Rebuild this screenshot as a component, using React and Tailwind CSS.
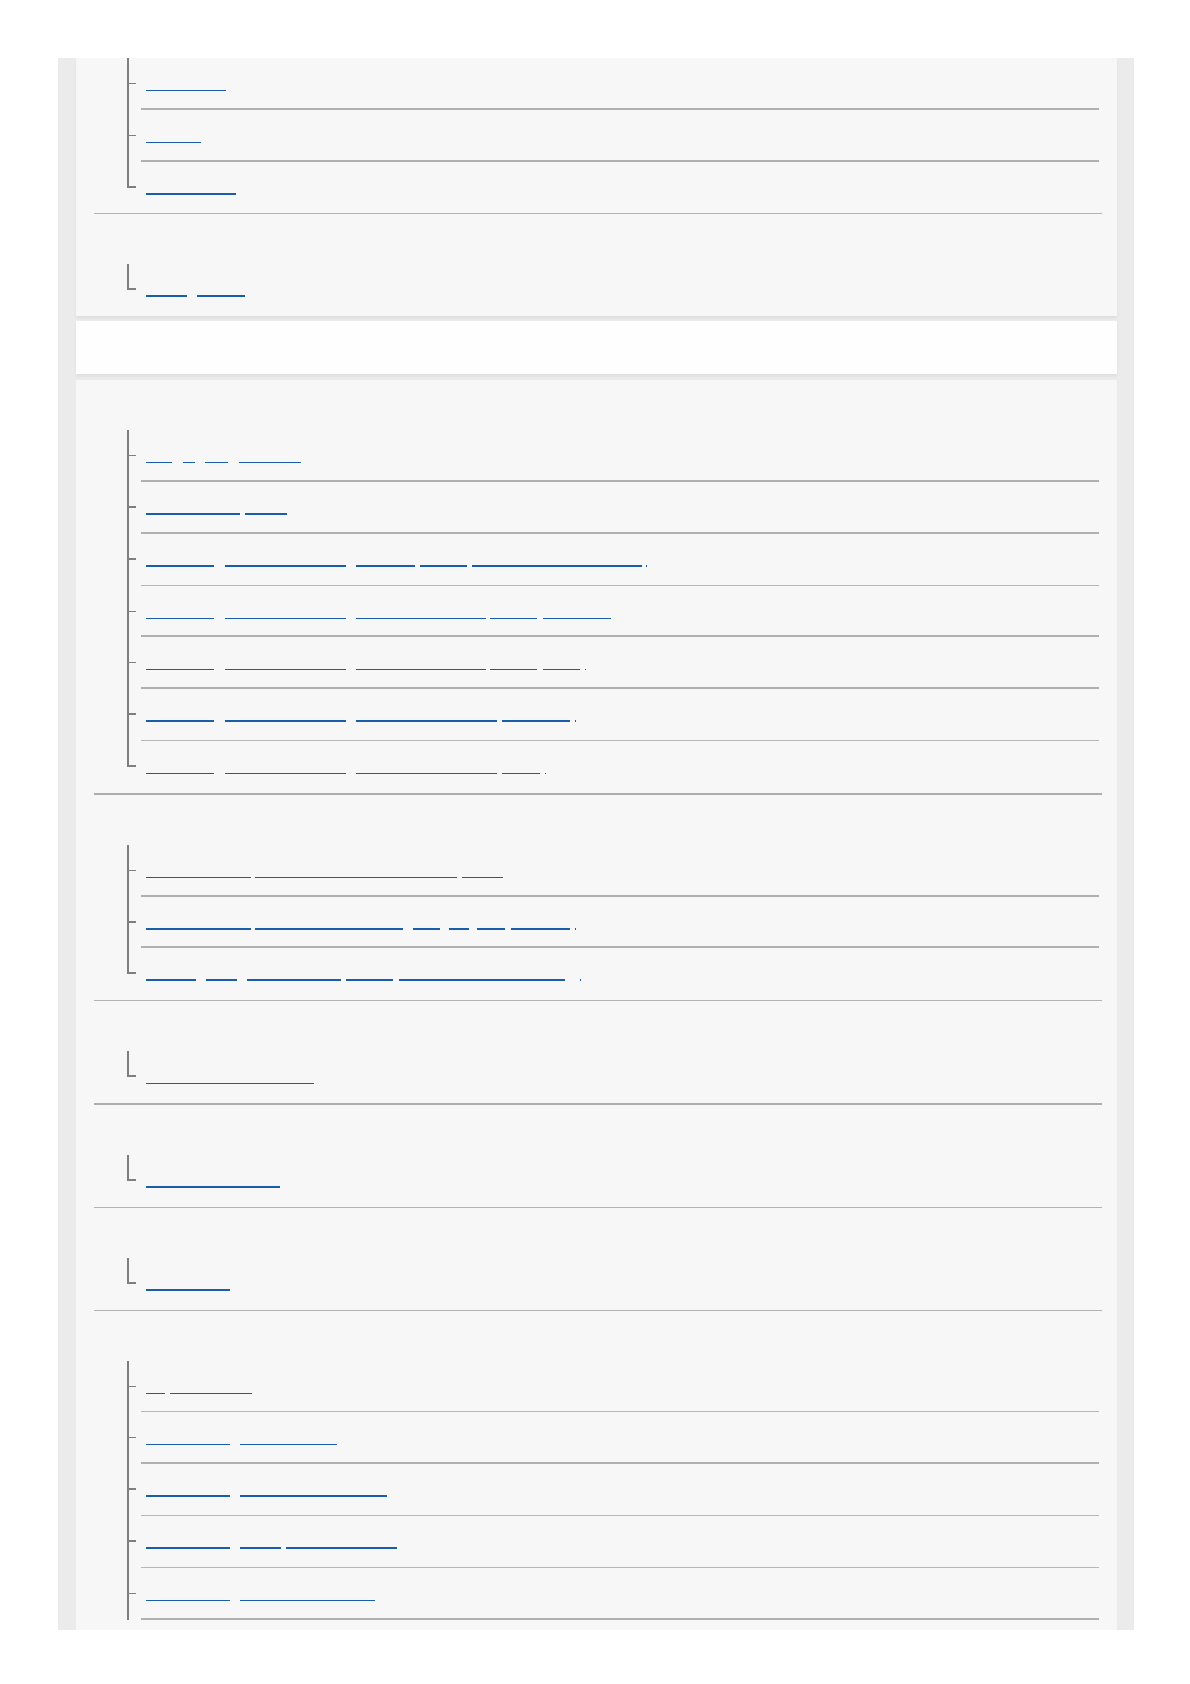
import clsx from 'clsx';

// link underlines, as [left, right] page x positions; the text itself is blank in the source
const panels = [
  {
    open: false,
    sections: [
      {
        cont: true,
        divider: 1,
        rows: [
          { segs: [[146, 226]], t: 0, sep: 2 },
          { segs: [[146, 201]], t: 0, sep: 2 },
          { segs: [[146, 236]], t: 1, sep: 0 },
        ],
      },
      {
        divider: 0,
        rows: [{ segs: [[146, 187], [197, 245]], t: 1, sep: 0 }],
      },
    ],
  },
  {
    open: true,
    sections: [
      {
        divider: 2,
        rows: [
          { segs: [[146, 172], [182.5, 194.6], [204.6, 228], [238.6, 301]], t: 0, sep: 2 },
          { segs: [[146, 240], [245, 287]], t: 1, sep: 2 },
          { segs: [[146, 214.3], [224.6, 345.7], [356, 415], [419.6, 467], [472, 642.5], [646, 647]], t: 1, sep: 1 },
          { segs: [[146, 214.3], [224.6, 345.7], [356, 485.7], [490, 537.5], [542.9, 610.7]], t: 0, sep: 2 },
          { segs: [[146, 214.3], [224.6, 345.7], [356, 485.7], [490, 537.5], [542.9, 580.4], [585.3, 586.3]], t: 0, sep: 2 },
          { segs: [[146, 214.3], [224.6, 345.7], [356, 497], [502.5, 570], [575, 576]], t: 1, sep: 1 },
          { segs: [[146, 214.3], [224.6, 345.7], [356, 497], [502.5, 540], [545.3, 546.3]], t: 0, sep: 0 },
        ],
      },
      {
        divider: 1,
        rows: [
          { segs: [[146, 250.7], [255.3, 457], [462, 503]], t: 0, sep: 2 },
          { segs: [[146, 250.7], [255.3, 402.7], [412.7, 439.7], [449.3, 468.7], [477, 504.7], [511.3, 570], [575.2, 576.2]], t: 1, sep: 2 },
          { segs: [[146, 196], [206, 236.7], [246.7, 341.3], [346, 393.3], [399, 565], [580, 581]], t: 1, sep: 0 },
        ],
      },
      { divider: 2, rows: [{ segs: [[146, 314]], t: 0, sep: 0 }] },
      { divider: 1, rows: [{ segs: [[146, 280]], t: 1, sep: 0 }] },
      { divider: 1, rows: [{ segs: [[146, 230]], t: 1, sep: 0 }] },
      {
        divider: 0,
        rows: [
          { segs: [[146, 165.3], [170, 252]], t: 0, sep: 1 },
          { segs: [[146, 230], [240.3, 337]], t: 0, sep: 2 },
          { segs: [[146, 230], [240.3, 387]], t: 1, sep: 1 },
          { segs: [[146, 230], [240.3, 281], [285.7, 397]], t: 1, sep: 1 },
          { segs: [[146, 230], [240.3, 375.3]], t: 0, sep: 2 },
        ],
      },
    ],
  },
];

function Underlines({ segs, thick }) {
  let prev = 146;
  return (
    <div className={clsx('flex', thick ? 'pt-[31px]' : 'pt-[32px]')}>
      {segs.map(([a, b], i) => {
        const ml = a - prev;
        prev = b;
        return (
          <a
            key={i}
            href="#"
            className={clsx('block shrink-0 bg-[#1a5ea9]', thick ? 'h-[2px]' : 'h-px')}
            style={{ marginLeft: ml, width: b - a }}
          />
        );
      })}
    </div>
  );
}

function Row({ row, last }) {
  return (
    <li className="flex h-[51.8px]">
      <div className={clsx('w-[14px] shrink-0', !last && 'border-l-2 border-[#7f7f7f]')}>
        {last ? (
          <div className="h-[26px] w-[9px] border-b-2 border-l-2 border-[#7f7f7f]" />
        ) : (
          <div className={clsx('h-[26px] w-[7px] border-[#7f7f7f]', row.t ? 'border-b-2' : 'border-b')} />
        )}
      </div>
      <div
        className={clsx(
          'flex-1 pl-[5px]',
          row.sep === 2 && 'border-b-2 border-[#b0b0b0]',
          row.sep === 1 && 'border-b border-[#b6b6b6]'
        )}
      >
        <Underlines segs={row.segs} thick={row.t} />
      </div>
    </li>
  );
}

function Section({ section, open }) {
  const n = section.rows.length;
  return (
    <>
      <div className={section.cont ? '' : 'pt-[50px]'}>
        <ul className="ml-[51px] mr-[18px]">
          {section.rows.map((row, i) => (
            <Row key={i} row={row} last={!open && i === n - 1} />
          ))}
        </ul>
      </div>
      {section.divider > 0 && (
        <div
          className={clsx(
            'ml-[18px] mr-[15px]',
            section.divider === 2 ? 'h-[2px] bg-[#adadad]' : 'h-px bg-[#b3b3b3]'
          )}
        />
      )}
    </>
  );
}

export default function App() {
  return (
    <div className="min-h-screen bg-white pt-[58px] pl-[58px] font-['Liberation_Sans',sans-serif]">
      <div className="w-[1076px] bg-[#ebebeb] pl-[18px] pr-[17px]">
        <div className="bg-[#f7f7f7] shadow-[0_2px_3px_rgba(0,0,0,0.06)]">
          {panels[0].sections.map((s, i) => (
            <Section key={i} section={s} open={panels[0].open && i === panels[0].sections.length - 1} />
          ))}
        </div>

        <div className="mt-[5px] h-[53px] bg-[#fefefe] shadow-[0_2px_3px_rgba(0,0,0,0.06)]" />

        <div className="mt-[6px] bg-[#f7f7f7] pb-[10px]">
          {panels[1].sections.map((s, i) => (
            <Section key={i} section={s} open={panels[1].open && i === panels[1].sections.length - 1} />
          ))}
        </div>
      </div>
    </div>
  );
}
